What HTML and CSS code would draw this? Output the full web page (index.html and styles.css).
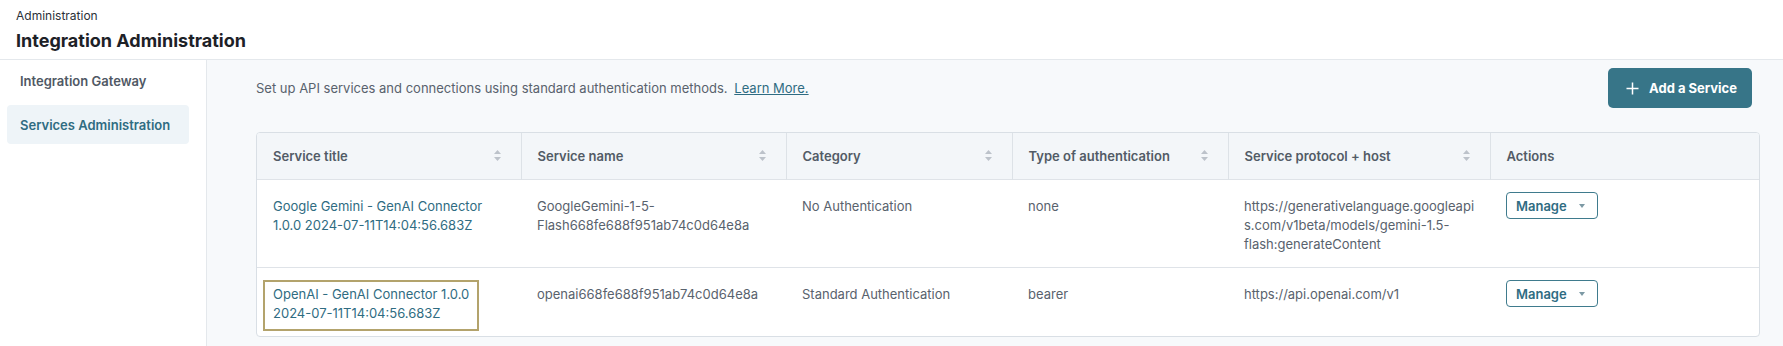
FILE: index.html
```html
<!DOCTYPE html>
<html lang="en">

<head>
    <meta charset="UTF-8">
    <meta name="viewport" content="width=device-width, initial-scale=1.0">
    <title>Integration Administration</title>
    <link rel="stylesheet" href="styles.css">
</head>

<body>
    <header class="page-header">
        <div class="crumb">Administration</div>
        <h1 class="page-title">Integration Administration</h1>
    </header>

    <div class="layout">
        <nav class="sidebar">
            <a class="nav-item" href="#">Integration Gateway</a>
            <a class="nav-item active" href="#">Services Administration</a>
        </nav>

        <main class="content">
            <div class="toolbar">
                <p class="intro">Set up API services and connections using standard authentication methods. <a href="#" class="learn-more">Learn More.</a></p>
                <button class="add-button" type="button">
                    <svg class="plus" width="13" height="13" viewBox="0 0 13 13"><path d="M6.5 0.5v12M0.5 6.5h12" stroke="currentColor" stroke-width="1.5" fill="none"/></svg>
                    Add a Service
                </button>
            </div>

            <div class="table-wrap">
                <table class="services">
                    <colgroup>
                        <col style="width: 264px">
                        <col style="width: 265px">
                        <col style="width: 226px">
                        <col style="width: 216px">
                        <col style="width: 262px">
                        <col style="width: 269px">
                    </colgroup>
                    <thead>
                        <tr>
                            <th><div class="th-inner">Service title <svg class="sort" width="7" height="11" viewBox="0 0 7 11"><path d="M3.5 0L7 4H0z M0 7h7L3.5 11z"/></svg></div></th>
                            <th><div class="th-inner">Service name <svg class="sort" width="7" height="11" viewBox="0 0 7 11"><path d="M3.5 0L7 4H0z M0 7h7L3.5 11z"/></svg></div></th>
                            <th><div class="th-inner">Category <svg class="sort" width="7" height="11" viewBox="0 0 7 11"><path d="M3.5 0L7 4H0z M0 7h7L3.5 11z"/></svg></div></th>
                            <th><div class="th-inner">Type of authentication <svg class="sort" width="7" height="11" viewBox="0 0 7 11"><path d="M3.5 0L7 4H0z M0 7h7L3.5 11z"/></svg></div></th>
                            <th><div class="th-inner">Service protocol + host <svg class="sort" width="7" height="11" viewBox="0 0 7 11"><path d="M3.5 0L7 4H0z M0 7h7L3.5 11z"/></svg></div></th>
                            <th><div class="th-inner">Actions</div></th>
                        </tr>
                    </thead>
                    <tbody>
                        <tr>
                            <td><a href="#" class="service-link">Google Gemini - GenAI Connector 1.0.0 2024-07-11T14:04:56.683Z</a></td>
                            <td class="wrap">GoogleGemini-1-5-Flash668fe688f951ab74c0d64e8a</td>
                            <td>No Authentication</td>
                            <td>none</td>
                            <td class="wrap host">https://generativelanguage.googleapis.com/v1beta/models/gemini-1.5-flash:generateContent</td>
                            <td><button class="manage" type="button">Manage <span class="caret"></span></button></td>
                        </tr>
                        <tr>
                            <td><a href="#" class="service-link focused">OpenAI - GenAI Connector 1.0.0<br>2024-07-11T14:04:56.683Z</a></td>
                            <td class="wrap">openai668fe688f951ab74c0d64e8a</td>
                            <td>Standard Authentication</td>
                            <td>bearer</td>
                            <td class="wrap host">https://api.openai.com/v1</td>
                            <td><button class="manage" type="button">Manage <span class="caret"></span></button></td>
                        </tr>
                    </tbody>
                </table>
            </div>
        </main>
    </div>
</body>

</html>
```

FILE: styles.css
```css
* {
    box-sizing: border-box;
}

body {
    margin: 0;
    font-family: 'Inter', 'Noto Sans', sans-serif;
    color: #59626d;
    background: #ffffff;
    height: 346px;
    overflow: hidden;
}

.page-header {
    height: 60px;
    padding: 8px 16px 0;
    border-bottom: 1px solid #e4e8ec;
}

.crumb {
    font-size: 12px;
    line-height: 16px;
    color: #2b3038;
}

.page-title {
    margin: 6px 0 0;
    font-size: 18px;
    line-height: 22px;
    font-weight: 700;
    color: #1d2127;
}

.layout {
    display: flex;
    height: 286px;
}

.sidebar {
    width: 207px;
    flex-shrink: 0;
    padding: 1px 17px 0 7px;
    border-right: 1px solid #e4e8ec;
    display: flex;
    flex-direction: column;
    gap: 5px;
}

.nav-item {
    display: flex;
    align-items: center;
    height: 39px;
    padding-left: 13px;
    border-radius: 4px;
    font-size: 13px;
    font-weight: 600;
    color: #4f5864;
    text-decoration: none;
}

.nav-item.active {
    background: #eef4f8;
    color: #2f6c82;
}

.content {
    flex: 1;
    background: #f7f9fb;
    padding: 8px 25px 0 49px;
}

.toolbar {
    display: flex;
    align-items: center;
    justify-content: space-between;
    height: 40px;
    margin-bottom: 24px;
}

.intro {
    margin: 0;
    font-size: 13px;
    color: #59626d;
}

.learn-more {
    margin-left: 3px;
    color: #2f6c82;
}

.add-button {
    display: flex;
    align-items: center;
    gap: 10px;
    height: 40px;
    margin-right: 8px;
    padding: 0 15px 0 18px;
    border: none;
    border-radius: 5px;
    background: #377588;
    color: #ffffff;
    font-family: inherit;
    font-size: 13px;
    font-weight: 700;
}

.table-wrap {
    border: 1px solid #d9dfe5;
    border-radius: 4px;
    overflow: hidden;
    background: #ffffff;
}

.services {
    width: 100%;
    border-collapse: collapse;
    table-layout: fixed;
    font-size: 13px;
}

.services th {
    height: 46px;
    padding: 0 16px;
    background: #f3f6f9;
    border-right: 1px solid #dde2e7;
    text-align: left;
    font-weight: 600;
    color: #525b66;
}

.services th:last-child {
    border-right: none;
}

.th-inner {
    display: flex;
    align-items: center;
    justify-content: space-between;
    padding-right: 4px;
}

.sort {
    fill: #bcc2ca;
    flex-shrink: 0;
}

.services td {
    padding: 17px 16px 13px;
    border-top: 1px solid #dfe3e8;
    vertical-align: top;
    line-height: 19px;
    color: #59626d;
}

.services td.wrap {
    overflow-wrap: anywhere;
}

.services td.host {
    padding-right: 12px;
}

.service-link {
    color: #2f6c82;
    text-decoration: none;
}

.service-link.focused {
    display: inline-block;
    margin: -5px -10px -8px;
    padding: 3px 8px 6px;
    border: 2px solid #b3a36c;
}

.manage {
    display: inline-flex;
    align-items: center;
    gap: 12px;
    height: 27px;
    margin-top: -6px;
    padding: 0 12px 0 9px;
    border: 1px solid #3f7b8d;
    border-radius: 4px;
    background: #ffffff;
    color: #2f6c82;
    font-family: inherit;
    font-size: 13px;
    font-weight: 600;
}

.caret {
    width: 0;
    height: 0;
    border-left: 3px solid transparent;
    border-right: 3px solid transparent;
    border-top: 4px solid #7c99a4;
}
```
